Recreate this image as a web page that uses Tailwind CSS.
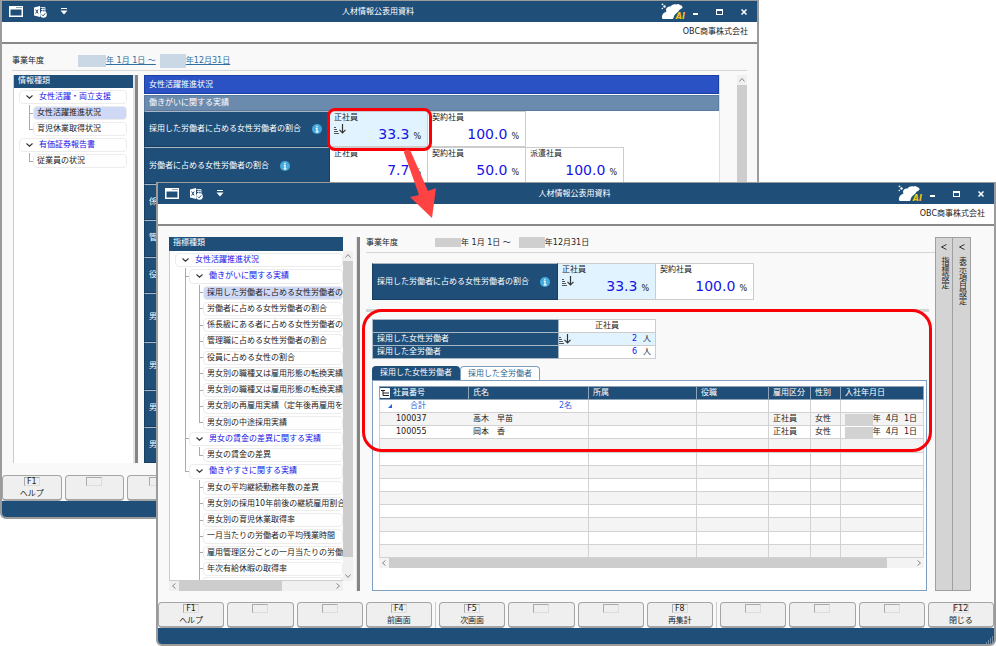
<!DOCTYPE html>
<html lang="ja">

<head>
    <meta charset="UTF-8" />
    <title>人材情報公表用資料</title>
    <script src="https://cdn.jsdelivr.net/npm/@tailwindcss/browser@4"></script>
</head>

<body class="bg-white font-['DejaVu_Sans','Noto_Sans_CJK_JP',sans-serif] text-[8px] leading-3 text-[#222]">
    <!-- shared icons -->
    <svg class="hidden">
        <symbol id="i-window" viewBox="0 0 14 11">
            <path d="M0 0h14v11H0z M1.5 3.5v6h11v-6z" fill="#fff" fill-rule="evenodd" />
            <path d="M7.5 1.5h1M9.5 1.5h1M11.5 1.5h1" stroke="#1f4e79" />
        </symbol>
        <symbol id="i-excel" viewBox="0 0 13 12">
            <path d="M0 1.5 6 0v11L0 9.500z" fill="#fff" />
            <path d="M1.600 3.500l2.600 4M4.200 3.500l-2.600 4" stroke="#1f4e79" stroke-width="1" />
            <path d="M6.500 1.500h4.500V6M7 3.500h4M7 5.500h2M8.800 1.500v4" stroke="#fff" stroke-width=".8" fill="none" />
            <circle cx="9.500" cy="8.500" r="3.300" fill="#fff" />
            <path d="M7.800 8.500l1.300 1.300 2.200-2.500" stroke="#1f4e79" fill="none" />
        </symbol>
        <symbol id="i-drop" viewBox="0 0 8 7">
            <path d="M1 .5h6" stroke="#fff" />
            <path d="M.5 2.500h7L4 6.500z" fill="#fff" />
        </symbol>
        <symbol id="i-bear" viewBox="0 0 24 17">
            <circle cx="1.500" cy="1.300" r=".9" fill="#fff" />
            <circle cx="3.500" cy="3.500" r="1.200" fill="#fff" />
            <circle cx="1.300" cy="5.500" r=".8" fill="#fff" />
            <path d="M1 15C.5 11.500 3 9.500 5.500 8.500 4 5.500 6.500 3 9.500 3.500c1.500-2 4-2.700 6-2 1-.8 2.500-.8 3 .2 2 .5 3.500 1.800 3 2.800-.5 1.200-2.500 1.500-3.500 3-.8 2-4.500 3.500-5 6L12 16H3c-1.300 0-2-.3-2-1z" fill="#fff" />
        </symbol>
        <symbol id="i-info" viewBox="0 0 10 10">
            <circle cx="5" cy="5" r="5" fill="#43aadb" />
            <path d="M5 1.700v1.500M3.800 4.400H5v3.300M3.600 7.800h2.900" stroke="#fff" stroke-width="1.200" fill="none" />
        </symbol>
        <symbol id="i-sort" viewBox="0 0 12 10">
            <path d="M0 3.500h2M0 5.500h3M0 7.500h4M0 9.500h5" stroke="#555" />
            <path d="M8.500 0v8.500M5.500 5.800l3 3 3-3" stroke="#333" stroke-width="1.200" fill="none" />
        </symbol>
        <symbol id="i-chevron" viewBox="0 0 7 4">
            <path d="M.5.500l3 2.700 3-2.700" stroke="#333" stroke-width="1.100" fill="none" />
        </symbol>
        <symbol id="i-up" viewBox="0 0 6 4"><path d="M.5 3.500l2.500-3 2.500 3" stroke="#888" fill="none" /></symbol>
        <symbol id="i-left" viewBox="0 0 4 6"><path d="M3.500.500l-3 2.500 3 2.500" stroke="#888" fill="none" /></symbol>
        <symbol id="i-right" viewBox="0 0 4 6"><path d="M.5.500l3 2.500-3 2.500" stroke="#888" fill="none" /></symbol>
    </svg>

    <main class="relative flex min-h-screen flex-col overflow-hidden pl-[156px] pt-[182px]">

        <!-- back window -->
        <section class="absolute bottom-[127px] left-0 right-[237px] top-0 flex flex-col rounded-b-md border-2 border-t border-[#9b9b9b] bg-[#f9f9f9]">
            <header class="flex h-[21px] shrink-0 items-center bg-[#1f4e79] text-white" data-titlebar></header>
            <div class="flex h-[22px] shrink-0 items-center justify-end border-b-2 border-[#888] bg-white pr-[9px]">OBC商事株式会社</div>

            <div class="mx-[10px] mt-2 flex h-[19px] shrink-0 items-center border-b border-[#d6d6d6]">
                <span class="w-[66px]">事業年度</span>
                <a href="#" class="flex items-center text-[#2f6ea3] underline">
                    <span class="h-3 w-7 bg-[#cad7e4]"></span>年 1月 1日 ～ <span class="ml-1 h-3.5 w-[26px] bg-[#cad7e4]"></span>年12月31日
                </a>
            </div>

            <div class="mt-1 flex min-h-0 flex-1 pl-[11px] pr-[10px]">
                <aside class="flex w-[120px] shrink-0 flex-col border-l border-[#ccc] bg-white">
                    <h2 class="h-[13px] bg-[#1f4e79] pl-1 text-white">情報種類</h2>
                    <ul id="infoTree" class="flex flex-col pl-[5px] pr-[6px] pt-px"></ul>
                </aside>
                <div class="w-[5px] shrink-0 border-l-2 border-r-3 border-l-[#e4e4e4] border-r-[#858585]"></div>

                <div class="ml-[6px] flex min-w-0 flex-1 flex-col border-r border-[#ddd] bg-white">
                    <h2 class="flex h-[19px] shrink-0 items-center border border-[#1d3fa3] bg-[#2a52c4] pl-1 text-white">女性活躍推進状況</h2>
                    <h3 class="mt-px flex h-4 shrink-0 items-center border border-[#5a7b9f] bg-[#6b8bae] pl-1 text-white">働きがいに関する実績</h3>
                    <div id="statRows" class="flex min-h-0 flex-1 flex-col"></div>
                </div>

                <div class="ml-[17px] w-[10px] shrink-0 bg-[#cdcdcd]">
                    <div class="flex h-[10px] items-center justify-center bg-[#f0f0f0]"><svg class="h-1 w-1.5"><use href="#i-up" /></svg></div>
                </div>
            </div>

            <div class="mt-3 flex shrink-0 gap-[3px]" data-fkeys="F1:ヘルプ,,,,,,,,,,,"></div>
            <footer class="h-4 shrink-0 rounded-b bg-[#1f4e79]"></footer>
        </section>

        <!-- front window -->
        <section class="relative flex flex-1 flex-col rounded-b-md border-2 border-t border-[#9b9b9b] bg-[#f9f9f9]">
            <header class="flex h-[21px] shrink-0 items-center bg-[#1f4e79] text-white" data-titlebar></header>
            <div class="flex h-[22px] shrink-0 items-center justify-end border-b-2 border-[#888] bg-white pr-[9px]">OBC商事株式会社</div>

            <div class="flex min-h-0 flex-1 pl-[11px] pr-[23px] pt-[11px]">
                <aside class="flex w-[184px] shrink-0 flex-col">
                    <h2 class="mr-[10px] h-[14px] bg-[#1f4e79] pl-1 text-white">指標種類</h2>
                    <div class="flex min-h-0 flex-1">
                        <ul id="indexTree" class="flex min-w-0 flex-1 flex-col overflow-hidden border-b border-l border-[#ccc] bg-white pl-[5px] pt-px"></ul>
                        <div class="flex w-[10px] shrink-0 flex-col bg-[#f0f0f0]">
                            <div class="flex h-[10px] items-center justify-center"><svg class="h-1 w-1.5"><use href="#i-up" /></svg></div>
                            <div class="flex-1 bg-[#cdcdcd]"></div>
                            <div class="flex h-6 items-end justify-center pb-[3px]"><svg class="h-1 w-1.5 rotate-180"><use href="#i-up" /></svg></div>
                        </div>
                    </div>
                    <div class="mr-[10px] flex h-[10px] items-center justify-between bg-[#f0f0f0]">
                        <span class="flex w-[10px] justify-center"><svg class="h-1.5 w-1"><use href="#i-left" /></svg></span>
                        <span class="mr-auto h-full w-[103px] bg-[#cdcdcd]"></span>
                        <span class="flex w-[10px] justify-center"><svg class="h-1.5 w-1"><use href="#i-right" /></svg></span>
                    </div>
                </aside>
                <div class="ml-[3px] w-[4px] shrink-0 border-l border-r-3 border-l-[#e4e4e4] border-r-[#858585]"></div>

                <div class="ml-[6px] flex min-w-0 flex-1 flex-col">
                    <div class="flex h-4 shrink-0 items-center border-b border-[#d6d6d6] pb-1">
                        <span class="w-[69px]">事業年度</span>
                        <span class="h-[9px] w-[26px] bg-[#cfcfcf]"></span>年 1月 1日 ～
                        <span class="ml-2 h-[11px] w-[26px] bg-[#cfcfcf]"></span>年12月31日
                    </div>

                    <div class="ml-[6px] mt-[10px] flex h-[37px] shrink-0" id="selectedStat"></div>
                    <div class="mr-[6px] mt-[9px] h-[3px] shrink-0 bg-[#d4d4d4]"></div>

                    <table class="ml-[6px] mt-[7px] h-10 w-[284px] shrink-0 table-fixed border-collapse">
                        <tr>
                            <td class="w-[186px] border border-[#a9b6c4] bg-[#1f4e79] p-0"></td>
                            <th class="border border-[#ccc] bg-white p-0 font-normal" scope="col">正社員</th>
                        </tr>
                        <tr>
                            <th class="border border-[#a9b6c4] bg-[#1f4e79] p-0 pl-1 text-left font-normal text-white" scope="row">採用した女性労働者</th>
                            <td class="border border-[#ccc] bg-[#e0f3ff] p-0">
                                <div class="flex items-center pr-1"><svg class="h-[10px] w-3"><use href="#i-sort" /></svg><span class="ml-auto mr-[6px] text-[#1414e6]">2</span>人</div>
                            </td>
                        </tr>
                        <tr>
                            <th class="border border-[#a9b6c4] bg-[#1f4e79] p-0 pl-1 text-left font-normal text-white" scope="row">採用した全労働者</th>
                            <td class="border border-[#ccc] bg-white p-0">
                                <div class="flex items-center pr-1"><span class="ml-auto mr-[6px] text-[#1414e6]">6</span>人</div>
                            </td>
                        </tr>
                    </table>

                    <div class="ml-[6px] mt-[7px] flex h-[14px] shrink-0">
                        <button type="button" class="w-[88px] rounded-t bg-[#1f4e79] text-white">採用した女性労働者</button>
                        <button type="button" class="w-20 rounded-t border border-b-0 border-[#7f9fc0] bg-white text-[#2f5f8f]">採用した全労働者</button>
                    </div>
                    <div class="ml-[6px] mr-[8px] min-h-0 flex-1 border border-[#7f9fc0] bg-white pl-[6px] pr-[2px] pt-[5px]">
                        <table class="h-[172px] w-full table-fixed border-collapse whitespace-nowrap">
                            <thead>
                                <tr class="bg-[#1f4e79] text-left text-white">
                                    <th class="w-[89px] border border-[#8fa3b8] p-0 font-normal">
                                        <div class="flex items-center gap-[3px]">
                                            <svg class="h-[10px] w-[10px]" viewBox="0 0 10 10">
                                                <rect width="10" height="10" rx="1" fill="#fff" />
                                                <path d="M1 2.500h4M3 2.500v5h2M5 5h4M5 7.500h4M3 5h2" stroke="#222" fill="none" />
                                            </svg>社員番号
                                        </div>
                                    </th>
                                    <th class="w-[120px] border border-[#8fa3b8] p-0 pl-1 font-normal">氏名</th>
                                    <th class="w-[108px] border border-[#8fa3b8] p-0 pl-1 font-normal">所属</th>
                                    <th class="w-[72px] border border-[#8fa3b8] p-0 pl-1 font-normal">役職</th>
                                    <th class="w-[42px] border border-[#8fa3b8] p-0 pl-1 font-normal">雇用区分</th>
                                    <th class="w-[30px] border border-[#8fa3b8] p-0 pl-1 font-normal">性別</th>
                                    <th class="border border-[#8fa3b8] p-0 pl-1 font-normal">入社年月日</th>
                                </tr>
                            </thead>
                            <tbody id="employees"></tbody>
                        </table>
                        <div class="flex h-[10px] items-center bg-[#f3f3f3]">
                            <span class="flex w-[10px] justify-center"><svg class="h-1.5 w-1"><use href="#i-left" /></svg></span>
                            <span class="mr-[27px] h-full flex-1 bg-[#cdcdcd]"></span>
                            <span class="flex w-[10px] justify-center"><svg class="h-1.5 w-1"><use href="#i-right" /></svg></span>
                        </div>
                    </div>
                </div>

                <div class="flex shrink-0 border border-[#a0a0a0] bg-[#d4d4d4]">
                    <button type="button" class="flex w-[17px] flex-col items-center gap-[7px] border-r border-[#a0a0a0] pt-[6px]">
                        <svg class="h-1.5 w-1.5" viewBox="0 0 6 6"><path d="M5.500.500L.5 3l5 2.500" stroke="#333" fill="none" /></svg>
                        <span class="[writing-mode:vertical-rl]">指標設定</span>
                    </button>
                    <button type="button" class="flex w-[17px] flex-col items-center gap-[7px] pt-[6px]">
                        <svg class="h-1.5 w-1.5" viewBox="0 0 6 6"><path d="M5.500.500L.5 3l5 2.500" stroke="#333" fill="none" /></svg>
                        <span class="[writing-mode:vertical-rl]">表示項目設定</span>
                    </button>
                </div>
            </div>

            <div class="mt-[11px] flex shrink-0 gap-[3px]" data-fkeys="F1:ヘルプ,,,F4:前画面,F5:次画面,,,F8:再集計,,,,F12:閉じる"></div>
            <footer class="flex h-4 shrink-0 items-end justify-end rounded-b bg-[#1f4e79]">
                <svg class="h-2 w-2" viewBox="0 0 8 8"><path d="M6 1h1M4 3h1M6 3h1M2 5h1M4 5h1M6 5h1M0 7h1M2 7h1M4 7h1M6 7h1" stroke="#b9c9d9" /></svg>
            </footer>
        </section>

        <!-- callouts -->
        <div class="pointer-events-none absolute left-[327px] top-[108px] h-[43px] w-[105px] rounded-lg border-3 border-[#fb0007]"></div>
        <div class="pointer-events-none absolute left-[362px] right-[64px] top-[309px] h-[143px] rounded-[20px] border-3 border-[#fb0007]"></div>
        <svg class="pointer-events-none absolute left-[400px] top-[148px] h-[72px] w-10" viewBox="0 0 40 72">
            <path d="M4 4.500Q4.500 1 8 1.500 10 2 11 4l17 39 8-3-4 30-22-21 9-2z" fill="#ff4343" />
        </svg>
    </main>

    <script>
        // title bars
        document.querySelectorAll('[data-titlebar]').forEach((bar) => {
            bar.innerHTML = `
                <div class="flex flex-1 items-center gap-[11px] pl-[7px]">
                    <button type="button" aria-label="メニュー"><svg class="block h-[11px] w-3.5"><use href="#i-window" /></svg></button>
                    <button type="button" aria-label="Excel"><svg class="block h-3 w-[13px]"><use href="#i-excel" /></svg></button>
                    <button type="button" aria-label="その他" class="ml-0.5"><svg class="block h-[7px] w-2"><use href="#i-drop" /></svg></button>
                </div>
                <h1>人材情報公表用資料</h1>
                <div class="flex flex-1 items-center justify-end pr-[10px]">
                    <span class="relative mr-2 h-[17px] w-6">
                        <svg class="h-[17px] w-6"><use href="#i-bear" /></svg>
                        <b class="absolute -bottom-[3px] right-0 font-['DejaVu_Sans'] italic text-[#f2c40f]">AI</b>
                    </span>
                    <button type="button" aria-label="最小化" class="mr-[18px] mt-1 h-0.5 w-[5px] bg-white"></button>
                    <button type="button" aria-label="最大化" class="mr-[18px] h-[6px] w-[7px] border border-t-2 border-white"></button>
                    <button type="button" aria-label="閉じる"><svg class="block h-1.5 w-1.5" viewBox="0 0 6 6"><path d="M.5.500l5 5M5.500.500l-5 5" stroke="#fff" stroke-width="1.500" /></svg></button>
                </div>`;
        });

        // function keys
        document.querySelectorAll('[data-fkeys]').forEach((row) => {
            row.innerHTML = row.dataset.fkeys.split(',').map((item, i) => {
                const [key, label] = item.split(':');
                const sep = i === 4 || i === 8 ? '<span class="w-px shrink-0 bg-[#ccc]"></span>' : '';
                return `${sep}<button type="button" class="flex h-[26px] min-w-0 flex-1 flex-col items-center rounded border border-b-2 border-[#a5a5a5] bg-[#efefef] pt-px">
                    <span class="flex h-[9px] w-4 items-center justify-center border border-[#dcdcdc] border-l-[#aaa] border-t-[#aaa]">${key || ''}</span>
                    <span class="mt-0.5">${label || ''}</span>
                </button>`;
            }).join('');
        });

        // guide marks: T = branch, L = last branch, I = line only, . = blank
        const guides = {
            T: '<span class="flex w-1 flex-col ml-[10px] self-stretch shrink-0"><i class="flex-1 border-b border-l border-[#aaa]"></i><i class="flex-1 border-l border-[#aaa]"></i></span>',
            L: '<span class="flex w-1 flex-col ml-[10px] self-stretch shrink-0"><i class="flex-1 border-b border-l border-[#aaa]"></i><i class="flex-1"></i></span>',
            I: '<span class="w-1 ml-[10px] self-stretch shrink-0 border-l border-[#aaa]"></span>',
            '.': '<span class="w-1 ml-[10px] shrink-0"></span>',
        };
        const tree = (rows) => rows.map(([marks, text, type]) => {
            const chevron = type === 'group' ? '<svg class="mr-[6px] ml-[3px] h-1 w-[7px] shrink-0"><use href="#i-chevron" /></svg>' : '';
            const color = type === 'group' ? 'text-[#1414e6]' : type === 'selected' ? 'bg-[#cfd8f5]' : 'bg-white';
            return `<li class="flex min-h-4 flex-1 items-center whitespace-nowrap">
                ${[...marks].map((m) => guides[m]).join('')}
                <a href="#" class="my-px flex min-w-0 flex-1 items-center self-stretch rounded border border-[#ececec] pl-[3px] ${color}">${chevron}${text}</a>
            </li>`;
        }).join('');

        document.getElementById('infoTree').innerHTML = tree([
            ['', '女性活躍・両立支援', 'group'],
            ['T', '女性活躍推進状況', 'selected'],
            ['L', '育児休業取得状況'],
            ['', '有価証券報告書', 'group'],
            ['L', '従業員の状況'],
        ]);
        document.getElementById('indexTree').innerHTML = tree([
            ['', '女性活躍推進状況', 'group'],
            ['T', '働きがいに関する実績', 'group'],
            ['IT', '採用した労働者に占める女性労働者の割合', 'selected'],
            ['IT', '労働者に占める女性労働者の割合'],
            ['IT', '係長級にある者に占める女性労働者の割合'],
            ['IT', '管理職に占める女性労働者の割合'],
            ['IT', '役員に占める女性の割合'],
            ['IT', '男女別の職種又は雇用形態の転換実績'],
            ['IT', '男女別の職種又は雇用形態の転換実績'],
            ['IT', '男女別の再雇用実績（定年後再雇用を除く）'],
            ['IL', '男女別の中途採用実績'],
            ['T', '男女の賃金の差異に関する実績', 'group'],
            ['IL', '男女の賃金の差異'],
            ['L', '働きやすさに関する実績', 'group'],
            ['.T', '男女の平均継続勤務年数の差異'],
            ['.T', '男女別の採用10年前後の継続雇用割合'],
            ['.T', '男女別の育児休業取得率'],
            ['.T', '一月当たりの労働者の平均残業時間'],
            ['.T', '雇用管理区分ごとの一月当たりの労働者'],
            ['.T', '年次有給休暇の取得率'],
        ]) + '<li class="flex h-[3px] shrink-0">' + guides['.'] + guides.I + '<span class="flex-1 rounded-t border border-b-0 border-[#ececec]"></span></li>';

        // ratio rows
        const statLabel = (text) => `<div class="flex w-[186px] shrink-0 items-center gap-[11px] border border-[#173f64] border-t-[#a9b6c4] bg-[#1f4e79] pl-1 text-white">${text}<svg class="h-[10px] w-[10px] shrink-0"><use href="#i-info" /></svg></div>`;
        const statCell = (name, value, active) => `<div class="flex w-[98px] shrink-0 flex-col border-r border-t border-b border-[#ccc] pl-1 pr-[6px] ${active ? 'bg-[#e0f3ff]' : 'bg-white'}">
            <span>${name}</span>
            <div class="flex items-baseline">
                ${active ? '<svg class="h-[10px] w-3 self-start"><use href="#i-sort" /></svg>' : ''}
                <span class="ml-auto text-sm leading-5 text-[#1414e6]">${value}</span><span class="ml-1">%</span>
            </div>
        </div>`;
        const hiring = statLabel('採用した労働者に占める女性労働者の割合') + statCell('正社員', '33.3', true) + statCell('契約社員', '100.0');
        document.getElementById('selectedStat').innerHTML = hiring;
        document.getElementById('statRows').innerHTML = `
            <div class="flex min-h-0 flex-[3]">${hiring}</div>
            <div class="flex min-h-0 flex-[3]">${statLabel('労働者に占める女性労働者の割合')}${statCell('正社員', '7.7')}${statCell('契約社員', '50.0')}${statCell('派遣社員', '100.0')}</div>
            <div class="flex min-h-0 flex-[3]">${statLabel('係長級にある者に占める女性労働者の割合')}</div>
            <div class="flex min-h-0 flex-[3]">${statLabel('管理職に占める女性労働者の割合')}</div>
            <div class="flex min-h-0 flex-[3]">${statLabel('役員に占める女性の割合')}</div>
            <div class="flex min-h-0 flex-[4]">${statLabel('男女別の職種又は雇用形態の転換実績')}</div>
            <div class="flex min-h-0 flex-[4]">${statLabel('男女別の職種又は雇用形態の転換実績')}</div>
            <div class="flex min-h-0 flex-[3]">${statLabel('男女別の再雇用実績')}</div>
            <div class="flex min-h-0 flex-[3]">${statLabel('男女別の中途採用実績')}</div>`;

        // employee list
        const cell = (html, span = 1) => `<td colspan="${span}" class="border border-[#d2d2d2] p-0 pl-1">${html}</td>`;
        const person = (no, name) => cell(`<div class="flex"><span class="w-[89px] pl-3">${no}</span>${name}</div>`, 2) + cell('') + cell('') + cell('正社員') + cell('女性') +
            cell('<div class="flex items-center justify-end pr-[6px]"><span class="h-[11px] w-[29px] bg-[#d2d2d2]"></span><span class="whitespace-pre">年  4月  1日</span></div>');
        const blank = cell('', 2) + cell('').repeat(5);
        const lines = [
            cell('<div class="flex items-center text-[#1f5fe0]"><svg class="ml-1 mr-[18px] h-1 w-1" viewBox="0 0 4 4"><path d="M4 0v4H0z" fill="#1f5fe0" /></svg>合計<span class="ml-auto mr-4">2名</span></div>', 2) + cell('').repeat(5),
            person('100037', '高木　早苗'),
            person('100055', '岡本　香'),
            ...Array(9).fill(blank),
        ];
        document.getElementById('employees').innerHTML = lines.map((html) => `<tr class="h-[13px] bg-white even:bg-[#f4f4f4]">${html}</tr>`).join('');
    </script>
</body>

</html>
